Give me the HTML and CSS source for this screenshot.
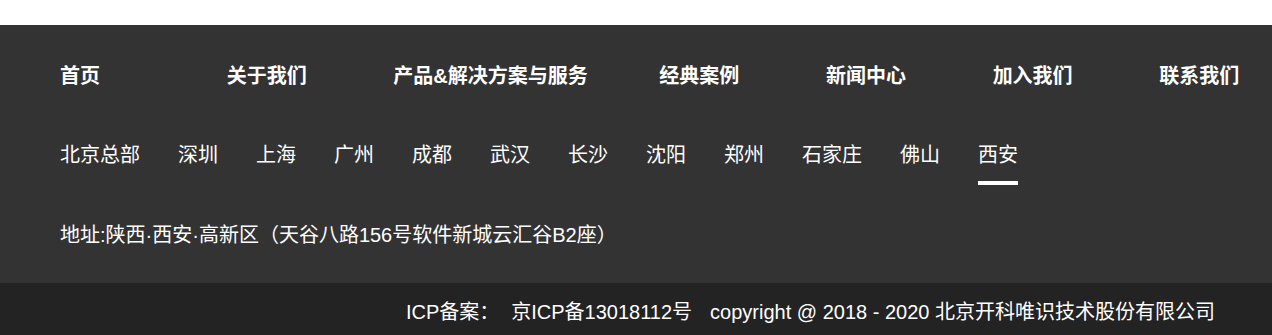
FILE: index.html
```html
<!DOCTYPE html>
<html lang="zh-CN">
<head>
<meta charset="utf-8">
<title>Footer</title>
<link rel="stylesheet" href="styles.css">
</head>
<body>
<footer class="footer">
  <div class="footer-main">
    <ul class="nav">
      <li class="nav-item">首页</li>
      <li class="nav-item">关于我们</li>
      <li class="nav-item nav-item-wide">产品&amp;解决方案与服务</li>
      <li class="nav-item">经典案例</li>
      <li class="nav-item">新闻中心</li>
      <li class="nav-item">加入我们</li>
      <li class="nav-item nav-item-last">联系我们</li>
    </ul>
    <ul class="cities">
      <li class="city">北京总部</li>
      <li class="city">深圳</li>
      <li class="city">上海</li>
      <li class="city">广州</li>
      <li class="city">成都</li>
      <li class="city">武汉</li>
      <li class="city">长沙</li>
      <li class="city">沈阳</li>
      <li class="city">郑州</li>
      <li class="city">石家庄</li>
      <li class="city">佛山</li>
      <li class="city city-active">西安</li>
    </ul>
    <p class="address">地址:陕西·西安·高新区（天谷八路156号软件新城云汇谷B2座）</p>
  </div>
  <div class="footer-bottom">
    <span class="seg seg-label">ICP备案：</span><span class="seg seg-icp">京ICP备13018112号</span><span class="seg">copyright @ 2018 - 2020 北京开科唯识技术股份有限公司</span>
  </div>
</footer>
</body>
</html>
```
FILE: styles.css
```css
* { box-sizing: border-box; }
html, body { margin: 0; padding: 0; background: #fff; }
body {
  font-family: "Liberation Sans", "Noto Sans CJK SC", sans-serif;
  color: #fff;
}
.footer {
  margin-top: 25px;
}
.footer-main {
  background: #333333;
  padding: 41px 0 38px 60px;
}
.nav, .cities {
  list-style: none;
  margin: 0;
  padding: 0;
  display: flex;
}
.nav-item {
  width: 166.667px;
  flex: none;
  font-size: 20px;
  line-height: 20px;
  font-weight: 700;
  white-space: nowrap;
}
.nav-item-wide { width: 266px; }
.nav-item-last { width: auto; }
.cities {
  margin-top: 59px;
  gap: 38px;
}
.city {
  font-size: 20px;
  line-height: 20px;
  padding-bottom: 16px;
  border-bottom: 4px solid transparent;
  white-space: nowrap;
}
.city-active { border-bottom-color: #fff; }
.address {
  margin: 40px 0 0;
  font-size: 20px;
  line-height: 20px;
  white-space: nowrap;
}
.footer-bottom {
  background: #232323;
  height: 52px;
  display: flex;
  justify-content: flex-end;
  align-items: center;
  padding: 5px 57px 0 0;
  font-size: 20px;
  line-height: 20px;
  white-space: nowrap;
}
.seg-label { margin-right: 12px; }
.seg-icp { margin-right: 18px; }
```
